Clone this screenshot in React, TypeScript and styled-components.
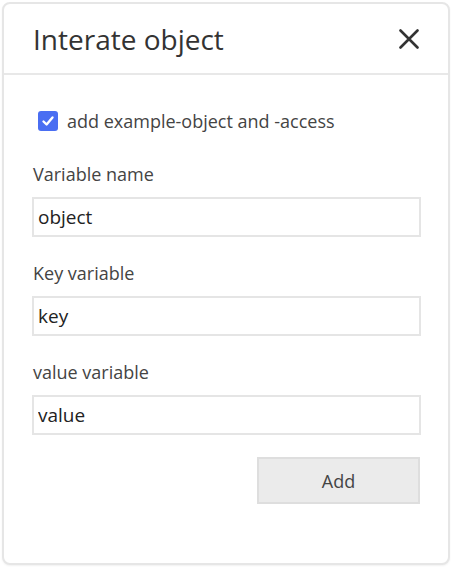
import styled, { createGlobalStyle } from 'styled-components';

const GlobalStyle = createGlobalStyle`
  html, body {
    margin: 0;
    padding: 0;
    background: #ffffff;
  }
  body {
    font-family: "Open Sans", "Noto Sans", Arial, sans-serif;
  }
`;

const Styled = {
  Dialog: styled.div`
    box-sizing: border-box;
    margin: 2px;
    width: 448px;
    height: 563px;
    border: 2px solid #e6e6e6;
    border-radius: 8px;
    background: #ffffff;
    box-shadow: 0 1px 2px rgba(0, 0, 0, 0.06);
    display: flex;
    flex-direction: column;
  `,

  Header: styled.div`
    display: flex;
    align-items: center;
    justify-content: space-between;
    height: 69px;
    padding: 0 29px 0 29px;
    border-bottom: 2px solid #e8e8e8;
  `,

  Title: styled.h1`
    margin: 0;
    font-size: 28px;
    line-height: 36px;
    font-weight: 400;
    color: #333333;
  `,

  CloseButton: styled.button`
    display: flex;
    align-items: center;
    justify-content: center;
    border: none;
    background: transparent;
    padding: 0;
    width: 20px;
    height: 20px;
    cursor: pointer;
  `,

  Body: styled.div`
    display: flex;
    flex-direction: column;
    padding: 34px 27px 0 28px;
  `,

  CheckRow: styled.label`
    display: flex;
    align-items: center;
    gap: 9px;
    padding-left: 6px;
    font-size: 18px;
    line-height: 24px;
    color: #444444;
    margin-bottom: 29px;
  `,

  CheckBox: styled.span`
    display: flex;
    align-items: center;
    justify-content: center;
    width: 20px;
    height: 20px;
    border-radius: 3px;
    background: #4a6ef2;
  `,

  Field: styled.div`
    display: flex;
    flex-direction: column;
    gap: 11px;
    margin-top: 24px;

    &:first-of-type {
      margin-top: 0;
    }
  `,

  Label: styled.label`
    font-size: 18px;
    line-height: 24px;
    color: #444444;
    padding-left: 1px;
  `,

  Input: styled.input`
    box-sizing: border-box;
    width: 389px;
    height: 40px;
    border: 2px solid #e5e5e5;
    outline: none;
    padding: 0 4px;
    font-family: inherit;
    font-size: 19px;
    color: #222222;
    background: #ffffff;
  `,

  Actions: styled.div`
    display: flex;
    justify-content: flex-end;
    padding-right: 1px;
    margin-top: 22px;
  `,

  AddButton: styled.button`
    box-sizing: border-box;
    width: 163px;
    height: 47px;
    border: 2px solid #dedede;
    background: #ebebeb;
    font-family: inherit;
    font-size: 18px;
    color: #444444;
    cursor: pointer;
  `,
};

const fields = [
  { id: 'name', label: 'Variable name', value: 'object' },
  { id: 'key', label: 'Key variable', value: 'key' },
  { id: 'value', label: 'value variable', value: 'value' },
];

export default function App() {
  return (
    <>
      <GlobalStyle />
      <Styled.Dialog>
        <Styled.Header>
          <Styled.Title>Interate object</Styled.Title>
          <Styled.CloseButton aria-label="Close">
            <svg width="20" height="20" viewBox="0 0 20 20">
              <path d="M1.5 1.5 L18.5 18.5 M18.5 1.5 L1.5 18.5" stroke="#333333" strokeWidth="2.6" strokeLinecap="round" />
            </svg>
          </Styled.CloseButton>
        </Styled.Header>
        <Styled.Body>
          <Styled.CheckRow>
            <Styled.CheckBox>
              <svg width="14" height="14" viewBox="0 0 14 14">
                <path d="M2.5 7.5 L5.6 10.5 L11.5 3.5" fill="none" stroke="#ffffff" strokeWidth="2.4" strokeLinecap="round" strokeLinejoin="round" />
              </svg>
            </Styled.CheckBox>
            add example-object and -access
          </Styled.CheckRow>
          {fields.map(({ id, label, value }) => (
            <Styled.Field key={id}>
              <Styled.Label htmlFor={id}>{label}</Styled.Label>
              <Styled.Input id={id} defaultValue={value} />
            </Styled.Field>
          ))}
          <Styled.Actions>
            <Styled.AddButton>Add</Styled.AddButton>
          </Styled.Actions>
        </Styled.Body>
      </Styled.Dialog>
    </>
  );
}
